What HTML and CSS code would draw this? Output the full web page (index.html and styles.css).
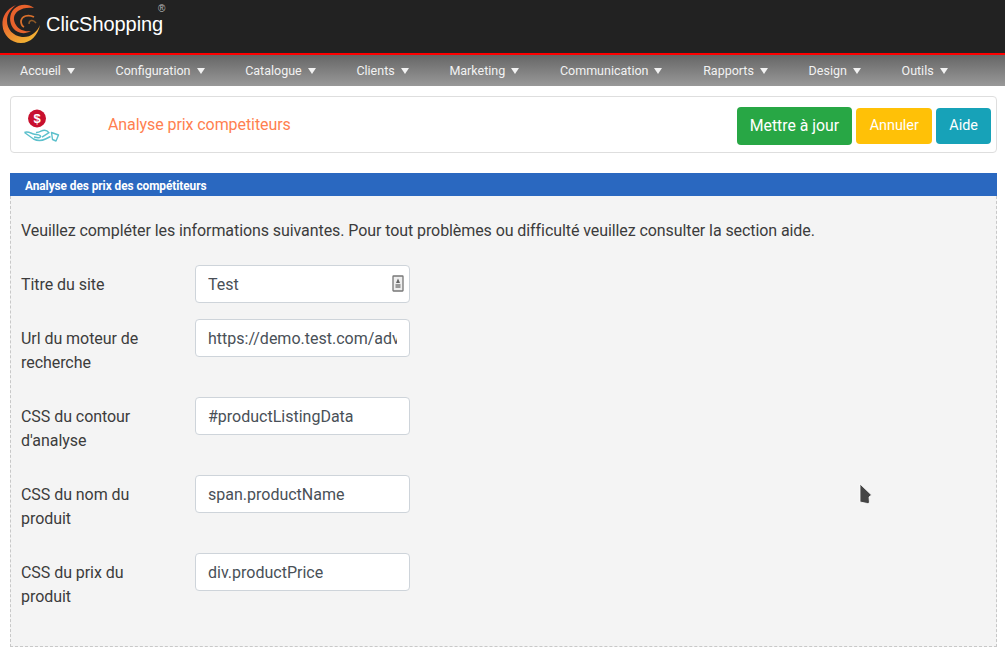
FILE: index.html
```html
<!DOCTYPE html>
<html lang="fr">
<head>
<meta charset="utf-8">
<title>ClicShopping</title>
<link rel="stylesheet" href="styles.css">
</head>
<body>
<header class="topbar">
  <div class="brand">
    <svg class="brand-logo" width="42" height="42" viewBox="0 0 42 42" aria-hidden="true">
      <defs>
        <linearGradient id="swirl" x1="0" y1="0" x2="0.6" y2="1">
          <stop offset="0" stop-color="#e4472c"/>
          <stop offset="0.55" stop-color="#ec7a30"/>
          <stop offset="1" stop-color="#f2b233"/>
        </linearGradient>
      </defs>
      <path fill="url(#swirl)" d="M15 3C5 7 1 15 1.500 23 2 33 10 41 20 41c10 0 17-8 19-18-3 7-10 13-18 12C12 34 6 27 6 19 6 12 10 7 15 3z"/>
      <path fill="#e8622c" d="M33 6C27 1 18 2 13 7 8 12 8 20 12 26c4 5 11 7 18 3-6 1-12-1-15-6-3-5-3-10 2-14 4-3 10-4 16-3z"/>
      <path fill="none" stroke="#d9702c" stroke-width="1.800" d="M33 15c-6-3-12-1-13 4 0 3 1 5 3 6"/>
      <path fill="none" stroke="#8f5a28" stroke-width="1.500" d="M35 21c-3-4-7-3-7 1"/>
    </svg>
    <span class="brand-name">ClicShopping<sup class="brand-reg">®</sup></span>
  </div>
</header>
<nav class="menu">
  <a class="menu-item">Accueil<i class="caret"></i></a>
  <a class="menu-item">Configuration<i class="caret"></i></a>
  <a class="menu-item">Catalogue<i class="caret"></i></a>
  <a class="menu-item">Clients<i class="caret"></i></a>
  <a class="menu-item">Marketing<i class="caret"></i></a>
  <a class="menu-item">Communication<i class="caret"></i></a>
  <a class="menu-item">Rapports<i class="caret"></i></a>
  <a class="menu-item">Design<i class="caret"></i></a>
  <a class="menu-item">Outils<i class="caret"></i></a>
</nav>
<main class="page">
  <section class="titlecard">
    <svg class="title-icon" width="40" height="40" viewBox="0 0 40 40" aria-hidden="true">
      <circle cx="13" cy="13.500" r="9" fill="#c8102e"/>
      <text x="13" y="18" class="dollar" text-anchor="middle">$</text>
      <path d="M0.500 27.500c3-1.500 6 .5 9 1.500 2 .7 5 .5 6.500 1.500 1.500 1 0 2.500-2 2.200l-4-.7m8 .2 7-4.500c-2-2.500-5-3-8-1.500-2 1-3 1.500-5 1.200M0.500 27.500l9 6.500c4 2 9 1.500 12 0l5-2.500M27.500 27.500l7 2.500-2.500 6-3.500-1.500z" fill="none" stroke="#5cc0cc" stroke-width="1.400" stroke-linejoin="round"/>
    </svg>
    <h1 class="title">Analyse prix competiteurs</h1>
    <div class="actions">
      <button class="btn btn-success">Mettre à jour</button>
      <button class="btn btn-warning">Annuler</button>
      <button class="btn btn-info">Aide</button>
    </div>
  </section>
  <section class="panel">
    <h2 class="panel-head">Analyse des prix des compétiteurs</h2>
    <div class="panel-body">
      <p class="intro">Veuillez compléter les informations suivantes. Pour tout problèmes ou difficulté veuillez consulter la section aide.</p>
      <div class="row">
        <label class="label">Titre du site</label>
        <div class="field">
          <input class="input input-icon" type="text" value="Test">
          <svg class="field-icon" width="12" height="17" viewBox="0 0 12 17" aria-hidden="true">
            <rect x="1" y="1" width="10" height="15" rx="0.500" fill="#eee" stroke="#777" stroke-width="1.300"/>
            <path d="M6 3.500 8 8H4z" fill="#666"/>
            <rect x="3.500" y="9" width="5" height="4" fill="#999"/>
          </svg>
        </div>
      </div>
      <div class="row">
        <label class="label">Url du moteur de recherche</label>
        <div class="field"><input class="input" type="text" value="https://demo.test.com/advanced_search"></div>
      </div>
      <div class="row">
        <label class="label">CSS du contour d'analyse</label>
        <div class="field"><input class="input" type="text" value="#productListingData"></div>
      </div>
      <div class="row">
        <label class="label">CSS du nom du produit</label>
        <div class="field"><input class="input" type="text" value="span.productName"></div>
      </div>
      <div class="row">
        <label class="label">CSS du prix du produit</label>
        <div class="field"><input class="input" type="text" value="div.productPrice"></div>
      </div>
    </div>
  </section>
</main>
<svg class="cursor" width="14" height="22" viewBox="0 0 14 22" aria-hidden="true">
  <path d="M1 1 12.500 12 10 14l.5 6-2 .5L1 19z" fill="#444" stroke="#fff" stroke-width="0.800"/>
</svg>
</body>
</html>
```
FILE: styles.css
```css
* { box-sizing: border-box; }
html, body { height: 100%; }
body {
  margin: 0;
  background: #fff;
  color: #3c3c3c;
  font-family: Roboto, "Liberation Sans", sans-serif;
  font-size: 16px;
  line-height: 24px;
  letter-spacing: -0.055px;
  overflow: hidden;
}
.topbar {
  height: 55px;
  background: #222;
  border-bottom: 2px solid #f00;
  display: flex;
  align-items: flex-start;
}
.brand { display: flex; align-items: flex-start; padding: 2px 0 0 1px; }
.brand-logo { display: block; }
.brand-name {
  position: relative;
  margin: 8px 0 0 3px;
  color: #fff;
  font-family: "Liberation Sans", Arial, sans-serif;
  font-size: 20px;
  line-height: 28px;
}
.brand-reg {
  position: absolute;
  right: -2px;
  top: -7px;
  font-size: 10px;
  line-height: 12px;
  color: #bbb;
}
.menu {
  height: 31px;
  display: flex;
  align-items: center;
  padding-left: 20px;
  background: linear-gradient(#666, #999);
}
.menu-item {
  display: flex;
  align-items: center;
  margin-right: 40.700px;
  color: #f2f2f2;
  font-size: 12.500px;
  letter-spacing: 0;
  line-height: 20px;
  white-space: nowrap;
}
.caret {
  width: 0;
  height: 0;
  margin-left: 6px;
  border-left: 4.500px solid transparent;
  border-right: 4.500px solid transparent;
  border-top: 6px solid #f2f2f2;
}
.page { padding: 10px 8px 0 10px; }
.titlecard {
  height: 57px;
  display: flex;
  align-items: center;
  padding: 0 5px 0 13px;
  background: #fff;
  border: 1px solid #dedede;
  border-radius: 4px;
}
.title-icon { display: block; flex: none; }
.title {
  flex: 1;
  margin: 0 0 0 44px;
  color: #ff7f50;
  font-size: 16px;
  font-weight: 400;
  letter-spacing: -0.08px;
}
.actions { display: flex; align-items: center; gap: 4px; padding-top: 2px; }
.btn {
  height: 36px;
  padding: 0 13px;
  border: 0;
  border-radius: 4px;
  color: #fff;
  font-family: inherit;
  font-size: 14.400px;
}
.btn-success { height: 38px; background: #28a745; font-size: 15.800px; }
.btn-warning { padding: 0 13.500px; background: #ffc107; }
.btn-info { background: #17a2b8; }
.panel { margin-top: 20px; }
.panel-head {
  height: 23px;
  margin: 0;
  padding-left: 15px;
  background: #2a68c0;
  color: #fff;
  font-size: 11.850px;
  font-weight: 700;
  line-height: 26px;
}
.panel-body {
  height: 451px;
  padding: 23px 10px 0;
  background: #f4f4f4;
  border: 1px dashed #c8c8c8;
  border-top: 0;
}
.intro { margin: 0 0 22px; letter-spacing: -0.08px; }
.row { display: flex; margin-bottom: 16px; }
.label { width: 174px; flex: none; padding: 8px 20px 6px 0; }
.field { position: relative; width: 215px; flex: none; }
.input {
  display: block;
  width: 100%;
  height: 38px;
  padding: 6px 12px;
  border: 1px solid #ced4da;
  border-radius: 4px;
  background: #fff;
  color: #495057;
  font-family: inherit;
  font-size: 16px;
}
.input-icon { padding-right: 30px; }
.field-icon { position: absolute; right: 6px; top: 10px; }
.dollar { fill: #fff; font-family: "Liberation Sans", sans-serif; font-size: 13px; font-weight: 700; }
.cursor { position: absolute; left: 859px; top: 483px; }
```
